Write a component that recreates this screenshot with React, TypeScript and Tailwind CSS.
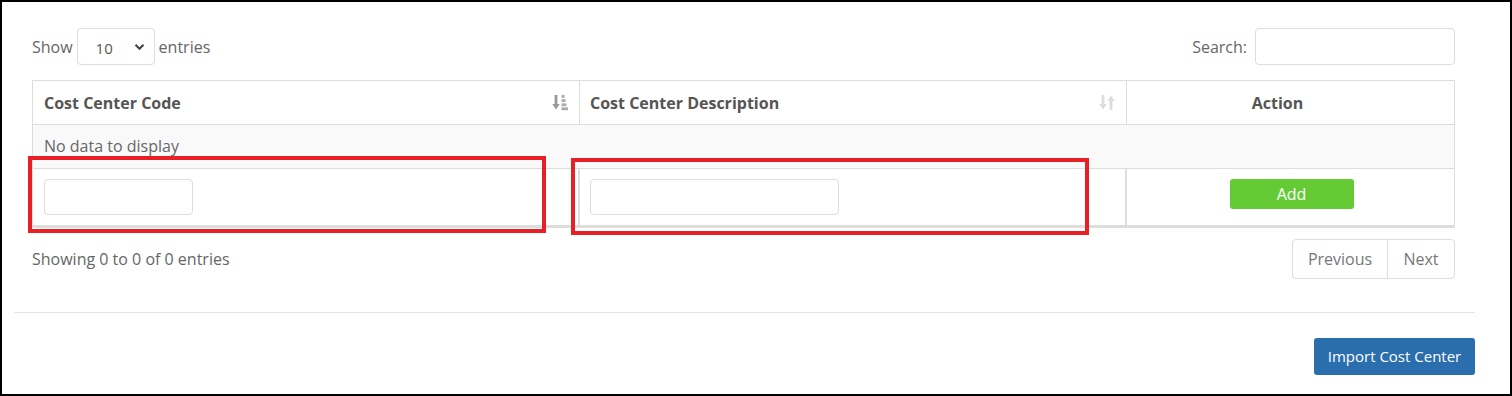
const SortAsc = () => (
  <svg width="16" height="17" viewBox="0 0 16 17" className="shrink-0">
    <path d="M4 1v11" stroke="#999" strokeWidth="2.8" />
    <path d="M0.3 10L4 15.5 7.7 10z" fill="#999" />
    <rect x="9.5" y="1" width="3" height="2.8" fill="#aaa" />
    <rect x="9.5" y="5.2" width="4" height="2.8" fill="#aaa" />
    <rect x="9.5" y="9.4" width="5" height="2.8" fill="#aaa" />
    <rect x="9.5" y="13.4" width="6.5" height="2.8" fill="#aaa" />
  </svg>
)

const SortBoth = () => (
  <svg width="16" height="17" viewBox="0 0 16 17" className="shrink-0">
    <path d="M4 1v11" stroke="#ddd" strokeWidth="2.8" />
    <path d="M0.3 10L4 15.5 7.7 10z" fill="#ddd" />
    <path d="M12 5v11" stroke="#ddd" strokeWidth="2.8" />
    <path d="M8.3 7L12 1.5 15.7 7z" fill="#ddd" />
  </svg>
)

const App = () => {
  return (
    <div className="relative w-[1512px] h-[396px] border-2 border-black bg-white font-['Open_Sans',sans-serif] text-[16px] text-[#666]">
      <div className="pl-[12px] pr-[35px]">
        <div className="pl-[18px] pr-[20px] pt-[26px]">
          <div className="flex items-center justify-between h-[37px]">
            <div className="flex items-center gap-[4px]">
              <span>Show</span>
              <div className="flex items-center justify-between w-[78px] h-[37px] border border-[#ddd] rounded-[4px] pl-[18px] pr-[9px] text-[#555]">
                <span className="pt-[3px] text-[15px]">10</span>
                <svg width="11" height="8" viewBox="0 0 11 8">
                  <path d="M1.5 1.8L5.5 5.8l4-4" stroke="#444" strokeWidth="2" fill="none" />
                </svg>
              </div>
              <span>entries</span>
            </div>
            <div className="flex items-center gap-[8px]">
              <span>Search:</span>
              <div className="w-[200px] h-[37px] border border-[#ddd] rounded-[4px]" />
            </div>
          </div>

          <div className="mt-[15px] w-[1423px] border border-[#ddd]">
            <div className="grid grid-cols-[547px_547px_1fr] h-[44px] border-b border-[#ddd] font-bold text-[#555]">
              <div className="flex items-center justify-between pl-[11px] pr-[11px] border-r border-[#ddd]">
                <span>Cost Center Code</span>
                <SortAsc />
              </div>
              <div className="flex items-center justify-between pl-[10px] pr-[11px] border-r border-[#ddd]">
                <span>Cost Center Description</span>
                <SortBoth />
              </div>
              <div className="flex items-center justify-center pr-[26px]">Action</div>
            </div>
            <div className="h-[44px] bg-[#f9f9f9] border-b border-[#ddd] pl-[11px] pt-[9px] leading-[24px]">
              No data to display
            </div>
            <div className="grid grid-cols-[547px_547px_1fr] h-[58px] border-b-2 border-[#ddd]">
              <div className="pl-[11px] pt-[10px] border-r-2 border-[#ddd]">
                <div className="w-[149px] h-[36px] border border-[#ddd] rounded-[4px]" />
              </div>
              <div className="pl-[10px] pt-[10px] border-r-2 border-[#ddd]">
                <div className="w-[249px] h-[36px] border border-[#ddd] rounded-[4px]" />
              </div>
              <div className="flex justify-center pt-[10px] pl-[2px]">
                <div className="flex items-center justify-center w-[124px] h-[30px] rounded-[3px] bg-[#64cb35] text-white">
                  Add
                </div>
              </div>
            </div>
          </div>

          <div className="flex items-center justify-between mt-[11px] h-[40px]">
            <span>Showing 0 to 0 of 0 entries</span>
            <div className="flex h-[40px] border border-[#ddd] rounded-[4px] text-[#777]">
              <div className="flex items-center justify-center w-[95px] border-r border-[#ddd]">Previous</div>
              <div className="flex items-center justify-center w-[66px]">Next</div>
            </div>
          </div>
        </div>

        <div className="mt-[33px] border-t border-[#e5e5e5]" />

        <div className="flex justify-end pt-[25px]">
          <div className="flex items-center justify-center w-[161px] h-[37px] rounded-[3px] bg-[#2a6ead] text-white text-[15px]">
            Import Cost Center
          </div>
        </div>
      </div>

      <div className="absolute left-[26px] top-[154px] w-[518px] h-[77px] border-[4px] border-[#e81f25]" />
      <div className="absolute left-[569px] top-[156px] w-[518px] h-[77px] border-[4px] border-[#e81f25]" />
    </div>
  )
}

export default App
